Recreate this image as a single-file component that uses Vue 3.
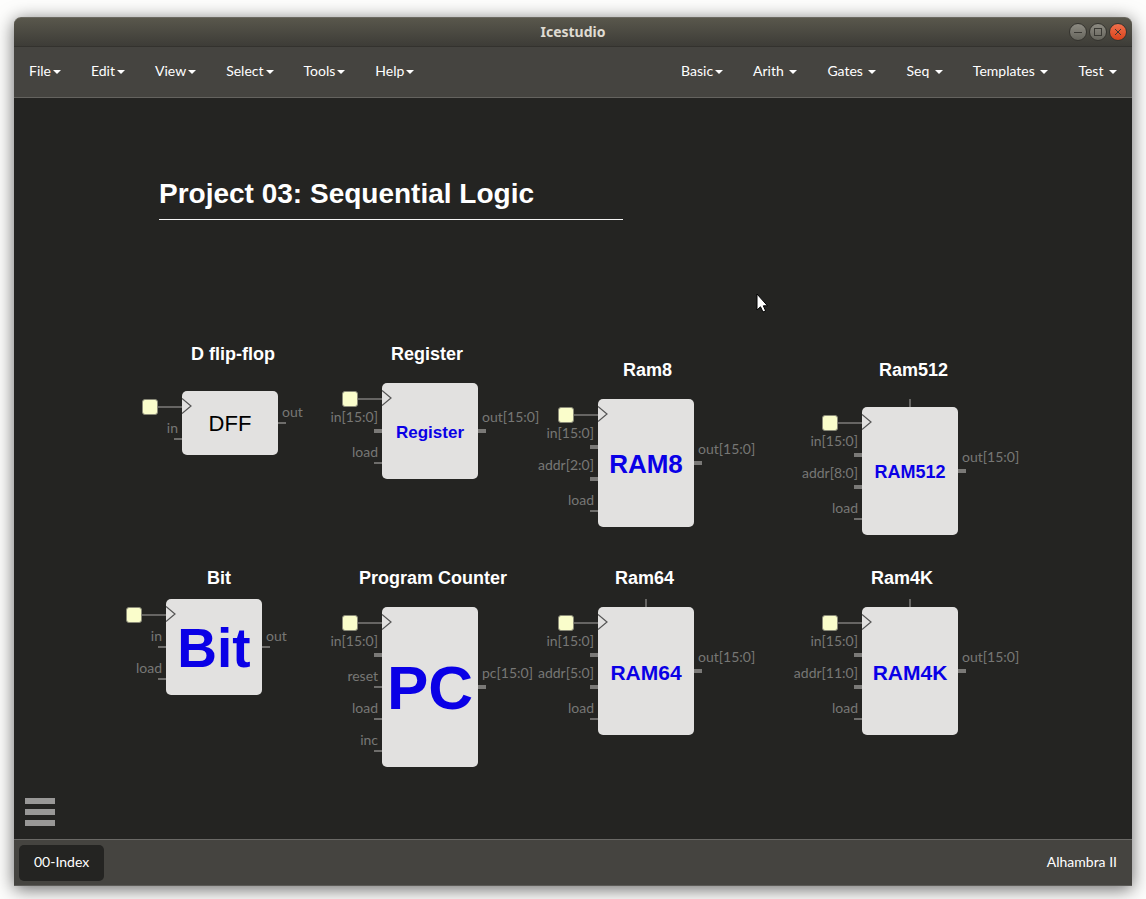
<script setup>
const leftMenus = ['File', 'Edit', 'View', 'Select', 'Tools', 'Help']
const rightMenus = ['Basic', 'Arith', 'Gates', 'Seq', 'Templates', 'Test']

// Canvas coordinates, relative to the top left corner of the design area.
const notes = [
  { text: 'D flip-flop', x: 177, y: 246 },
  { text: 'Register', x: 377, y: 246 },
  { text: 'Ram8', x: 609, y: 262 },
  { text: 'Ram512', x: 865, y: 262 },
  { text: 'Bit', x: 193, y: 470 },
  { text: 'Program Counter', x: 345, y: 470 },
  { text: 'Ram64', x: 601, y: 470 },
  { text: 'Ram4K', x: 857, y: 470 },
]

const p = (name, y) => ({ name, y, bus: name.includes('[') })

const blocks = [
  { label: 'DFF', x: 168, y: 293, h: 64, size: 22, plain: true, ins: [p('in', 48)], outs: [p('out', 32)] },
  { label: 'Register', x: 368, y: 285, h: 96, size: 17, ins: [p('in[15:0]', 48), p('load', 80)], outs: [p('out[15:0]', 48)] },
  { label: 'RAM8', x: 584, y: 301, h: 128, size: 26, ins: [p('in[15:0]', 48), p('addr[2:0]', 80), p('load', 112)], outs: [p('out[15:0]', 64)] },
  { label: 'RAM512', x: 848, y: 309, h: 128, size: 18, top: true, ins: [p('in[15:0]', 48), p('addr[8:0]', 80), p('load', 112)], outs: [p('out[15:0]', 64)] },
  { label: 'Bit', x: 152, y: 501, h: 96, size: 55, ins: [p('in', 48), p('load', 80)], outs: [p('out', 48)] },
  { label: 'PC', x: 368, y: 509, h: 160, size: 62, ins: [p('in[15:0]', 48), p('reset', 80), p('load', 112), p('inc', 144)], outs: [p('pc[15:0]', 80)] },
  { label: 'RAM64', x: 584, y: 509, h: 128, size: 21, top: true, ins: [p('in[15:0]', 48), p('addr[5:0]', 80), p('load', 112)], outs: [p('out[15:0]', 64)] },
  { label: 'RAM4K', x: 848, y: 509, h: 128, size: 21, top: true, ins: [p('in[15:0]', 48), p('addr[11:0]', 80), p('load', 112)], outs: [p('out[15:0]', 64)] },
]
</script>

<template>
  <div class="desktop">
    <div class="window">
      <header class="titlebar">
        <span class="title">Icestudio</span>
        <div class="controls">
          <button class="ctl" aria-label="Minimize">
            <svg viewBox="0 0 18 18"><path d="M5 9.5h8" /></svg>
          </button>
          <button class="ctl" aria-label="Maximize">
            <svg viewBox="0 0 18 18"><rect x="5.5" y="5.5" width="7" height="7" /></svg>
          </button>
          <button class="ctl close" aria-label="Close">
            <svg viewBox="0 0 18 18"><path d="M6 6l6 6M12 6l-6 6" /></svg>
          </button>
        </div>
      </header>

      <nav class="menubar">
        <div class="menus">
          <button v-for="m in leftMenus" :key="m" class="menu">{{ m }}<i class="caret"></i></button>
        </div>
        <div class="menus">
          <button v-for="(m, i) in rightMenus" :key="m" class="menu">{{ i > 0 ? m + ' ' : m }}<i class="caret"></i></button>
        </div>
      </nav>

      <main class="canvas">
        <h1 class="heading">Project 03: Sequential Logic</h1>

        <h2 v-for="n in notes" :key="n.text" class="note" :style="{ left: n.x + 'px', top: n.y + 'px' }">{{ n.text }}</h2>

        <div
          v-for="b in blocks"
          :key="b.label"
          class="block"
          :class="{ plain: b.plain }"
          :style="{ left: b.x + 'px', top: b.y + 'px', height: b.h + 'px' }"
        >
          <span class="block-label" :style="{ fontSize: b.size + 'px' }">{{ b.label }}</span>
          <span class="clock-box"></span>
          <span class="clock-wire"></span>
          <svg class="clock-mark" viewBox="0 0 12 18"><path d="M0 1.5L9 9L0 16.5" /></svg>
          <span v-if="b.top" class="top-pin"></span>
          <div v-for="i in b.ins" :key="i.name" class="port in" :class="{ bus: i.bus }" :style="{ top: i.y + 'px' }">
            <span class="port-name">{{ i.name }}</span>
          </div>
          <div v-for="o in b.outs" :key="o.name" class="port out" :class="{ bus: o.bus }" :style="{ top: o.y + 'px' }">
            <span class="port-name">{{ o.name }}</span>
          </div>
        </div>

        <svg class="pointer" viewBox="0 0 12 20">
          <path d="M1 1V17L4.5 13.8L7 19L9.6 17.8L7.3 12.8H11.5Z" />
        </svg>

        <button class="burger" aria-label="Toggle panel">
          <span></span><span></span><span></span>
        </button>
      </main>

      <footer class="footer">
        <button class="tab">00-Index</button>
        <span class="board">Alhambra II</span>
      </footer>
    </div>
  </div>
</template>

<style>
body {
  background: #fdfdfc;
}
</style>

<style scoped>
* {
  box-sizing: border-box;
}
.desktop {
  min-height: 100vh;
  padding: 17px 14px 13px;
  display: flex;
  overflow: hidden;
  font: 14px/20px Lato, sans-serif;
  color: #fff;
}
.window {
  flex: 1;
  min-width: 0;
  display: flex;
  flex-direction: column;
  border-radius: 7px 7px 0 0;
  box-shadow: 0 3px 18px rgba(0, 0, 0, 0.6);
}
button {
  border: 0;
  padding: 0;
  background: none;
  color: inherit;
  font: inherit;
}
.titlebar {
  position: relative;
  height: 30px;
  display: flex;
  align-items: center;
  justify-content: center;
  border-radius: 7px 7px 0 0;
  border-top: 1px solid #6a6860;
  border-bottom: 1px solid #33322e;
  background: linear-gradient(#59574c, #3d3c37);
}
.title {
  font: bold 14px/20px "Noto Sans", sans-serif;
  color: #dfdbd2;
}
.controls {
  position: absolute;
  right: 5px;
  top: 5px;
  display: flex;
  gap: 2px;
}
.ctl {
  width: 18px;
  height: 18px;
  border: 1px solid #35342f;
  border-radius: 50%;
  background: linear-gradient(#8d8b82, #66655d);
  display: flex;
}
.ctl svg {
  width: 18px;
  height: 18px;
  margin: -1px;
  flex: none;
  fill: none;
  stroke: #3a3934;
}
.ctl.close {
  background: linear-gradient(#f0704c, #d9431c);
}
.menubar {
  height: 51px;
  display: flex;
  justify-content: space-between;
  background: #454440;
  border-bottom: 1px solid #64635f;
}
.menus {
  display: flex;
}
.menu {
  display: flex;
  align-items: center;
  padding: 0 15px 2px;
  white-space: pre;
}
.caret {
  margin: 2px 0 0 2px;
  border: 4px solid transparent;
  border-top-color: #fff;
  border-bottom: 0;
}
.canvas {
  position: relative;
  flex: 1;
  min-height: 690px;
  overflow: hidden;
  background: #242422;
}
.heading {
  position: absolute;
  left: 145px;
  top: 76px;
  width: 464px;
  margin: 0;
  padding-bottom: 5px;
  border-bottom: 1px solid #f4f4f4;
  font: bold 28px/40px "Liberation Sans", Arial, sans-serif;
}
.note {
  position: absolute;
  margin: 0;
  white-space: nowrap;
  font: bold 18px/20px "Liberation Sans", Arial, sans-serif;
}
.block {
  position: absolute;
  width: 96px;
  padding-top: 2px;
  display: flex;
  align-items: center;
  justify-content: center;
  border-radius: 5px;
  background: #e2e1e0;
}
.block-label {
  font-family: "Liberation Sans", Arial, sans-serif;
  font-weight: bold;
  line-height: 1;
  color: #0a00e6;
}
.plain .block-label {
  font-weight: normal;
  color: #000;
}
.clock-box {
  position: absolute;
  left: -40px;
  top: 8px;
  width: 16px;
  height: 16px;
  border: 1px solid #8a8a78;
  border-radius: 3px;
  background: #fafdcb;
}
.clock-wire {
  position: absolute;
  left: -24px;
  top: 15px;
  width: 24px;
  height: 2px;
  background: #666563;
}
.clock-mark {
  position: absolute;
  left: 0;
  top: 6px;
  width: 12px;
  height: 18px;
  fill: none;
  stroke: #555;
  stroke-width: 1.2;
}
.top-pin {
  position: absolute;
  left: 47px;
  top: -8px;
  width: 2px;
  height: 8px;
  background: #666563;
}
.port {
  position: absolute;
  width: 8px;
  height: 2px;
  margin-top: -1px;
  background: #6e6d6b;
}
.port.bus {
  height: 4px;
  margin-top: -2px;
  background: #7a7977;
}
.port.in {
  right: 100%;
}
.port.out {
  left: 100%;
}
.port-name {
  position: absolute;
  bottom: 2px;
  white-space: nowrap;
  color: #777775;
}
.bus .port-name {
  bottom: 6px;
}
.in .port-name {
  right: 4px;
}
.out .port-name {
  left: 4px;
}
.pointer {
  position: absolute;
  left: 742px;
  top: 195px;
  width: 12px;
  height: 20px;
  fill: #fff;
  stroke: #000;
}
.burger {
  position: absolute;
  left: 11px;
  bottom: 13px;
  width: 30px;
  display: flex;
  flex-direction: column;
  gap: 5px;
}
.burger span {
  height: 6px;
  background: #999897;
}
.footer {
  height: 47px;
  display: flex;
  align-items: center;
  justify-content: space-between;
  padding: 0 15px 0 5px;
  background: #454440;
  border-top: 1px solid #6a6966;
  border-bottom: 1px solid #5c5b58;
}
.tab {
  height: 36px;
  padding: 0 15px 2px;
  border-radius: 5px;
  background: #242422;
}
.board {
  padding-bottom: 2px;
}
</style>
